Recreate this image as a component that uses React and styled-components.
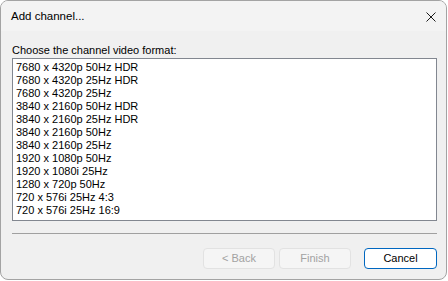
import React from 'react';
import styled, { createGlobalStyle } from 'styled-components';

const GlobalStyle = createGlobalStyle`
  html, body {
    margin: 0;
    padding: 0;
    background: #ffffff;
  }
  body {
    font-family: "Segoe UI", "Liberation Sans", Arial, sans-serif;
    font-size: 11px;
    color: #000;
  }
`;

// окно диалога
const Window = styled.div`
  box-sizing: border-box;
  width: 447px;
  height: 280px;
  border: 1px solid #a3a3a3;
  border-radius: 8px;
  background: #f0f0f0;
  overflow: hidden;
  display: flex;
  flex-direction: column;
`;

const TitleBar = styled.div`
  height: 30px;
  flex: none;
  display: flex;
  align-items: center;
  justify-content: space-between;
  padding: 0 9px 0 10px;
  background: #f3f3f3;
`;

const Title = styled.span`
  font-size: 11.5px;
  padding-bottom: 1px;
`;

const CloseButton = styled.button`
  border: none;
  background: transparent;
  padding: 0;
  width: 12px;
  height: 12px;
  display: flex;
  align-items: center;
  justify-content: center;
  margin-top: 2px;
`;

const Body = styled.div`
  flex: 1;
  display: flex;
  flex-direction: column;
  padding: 11px 9px 0 11px;
`;

const Label = styled.div`
  height: 16px;
  line-height: 16px;
  margin-bottom: 0;
`;

const ListBox = styled.ul`
  box-sizing: border-box;
  list-style: none;
  margin: 0;
  padding: 2px 3px;
  width: 425px;
  height: 163px;
  border: 1px solid #828790;
  background: #ffffff;
`;

const ListItem = styled.li`
  height: 13px;
  line-height: 13px;
  white-space: nowrap;
`;

const Separator = styled.div`
  width: 425px;
  height: 1px;
  margin-top: 12px;
  background: #a0a0a0;
`;

const Footer = styled.div`
  display: flex;
  justify-content: flex-end;
  align-items: center;
  margin-top: 14px;
  width: 425px;
`;

const Button = styled.button`
  box-sizing: border-box;
  width: ${(p) => (p.$wide ? 73 : 72)}px;
  height: 21px;
  margin-left: ${(p) => p.$gap || 0}px;
  padding: 0 0 1px;
  font-family: inherit;
  font-size: 11px;
  border-radius: 4px;
  border: 1px solid ${(p) => (p.$primary ? '#0067c0' : '#e2e2e2')};
  background: ${(p) => (p.$primary ? '#ffffff' : '#f5f5f5')};
  color: ${(p) => (p.disabled ? '#a2a2a2' : '#000')};
`;

const formats = [
  '7680 x 4320p 50Hz HDR',
  '7680 x 4320p 25Hz HDR',
  '7680 x 4320p 25Hz',
  '3840 x 2160p 50Hz HDR',
  '3840 x 2160p 25Hz HDR',
  '3840 x 2160p 50Hz',
  '3840 x 2160p 25Hz',
  '1920 x 1080p 50Hz',
  '1920 x 1080i 25Hz',
  '1280 x 720p 50Hz',
  '720 x 576i 25Hz 4:3',
  '720 x 576i 25Hz 16:9',
];

const App = () => {
  return (
    <>
      <GlobalStyle />
      <Window>
        <TitleBar>
          <Title>Add channel...</Title>
          <CloseButton aria-label="Close">
            <svg width="10" height="10" viewBox="0 0 10 10">
              <path d="M0.5 0.5 L9.5 9.5 M9.5 0.5 L0.5 9.5" stroke="#1a1a1a" strokeWidth="1" />
            </svg>
          </CloseButton>
        </TitleBar>
        <Body>
          <Label>Choose the channel video format:</Label>
          <ListBox>
            {formats.map((f) => (
              <ListItem key={f}>{f}</ListItem>
            ))}
          </ListBox>
          <Separator />
          <Footer>
            <Button disabled>&lt; Back</Button>
            <Button disabled $gap={4}>Finish</Button>
            <Button $primary $wide $gap={13}>Cancel</Button>
          </Footer>
        </Body>
      </Window>
    </>
  );
};

export default App;
